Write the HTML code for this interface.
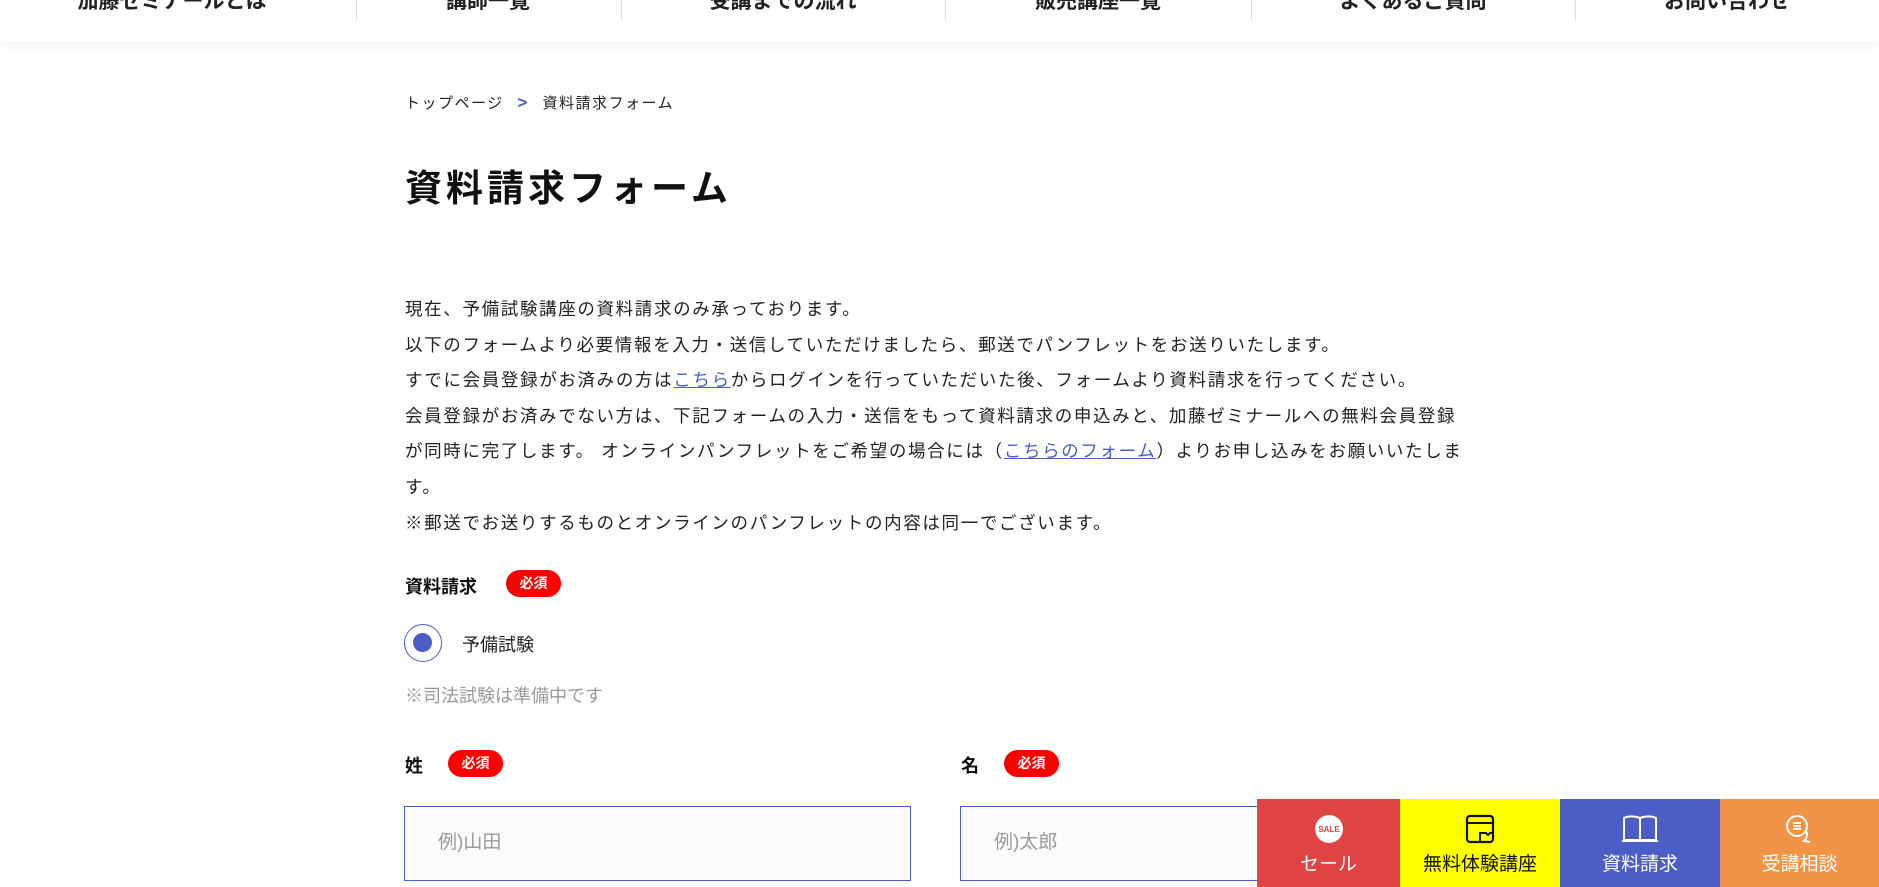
<!DOCTYPE html>
<html><head><meta charset="utf-8"><style>
*{margin:0;padding:0;box-sizing:border-box}
body{width:1879px;height:887px;overflow:hidden;background:#fff;font-family:"Liberation Sans","Noto Sans CJK JP",sans-serif;color:#222;position:relative}
.hdr{position:absolute;left:0;top:0;width:1879px;height:42px;background:#fff;box-shadow:0 3px 10px rgba(0,0,0,.06)}
.nav{position:absolute;top:-15px;font-size:21px;font-weight:bold;color:#222;white-space:nowrap;transform:translateX(-50%)}
.div{position:absolute;top:0;width:1px;height:20px;background:#ddd}
.abs{position:absolute;white-space:nowrap}
.bc{top:92px;left:405px;font-size:15px;letter-spacing:1.5px;color:#222}
h1{position:absolute;left:405px;top:158px;font-size:37px;font-weight:bold;letter-spacing:4px;color:#111}
.p{position:absolute;left:405px;top:292px;width:1072px;font-size:17.5px;line-height:35.6px;letter-spacing:1.65px;color:#222}
.p a{color:#4c5ec6;text-decoration:underline}
.lbl{font-size:18px;font-weight:bold;color:#111}
.badge{position:absolute;height:27px;width:55px;border-radius:14px;background:#f00;color:#fff;font-size:14px;font-weight:bold;text-align:center;line-height:27px}
.radio{position:absolute;left:404px;top:624px;width:38px;height:38px;border:1.5px solid #4c5ec6;border-radius:50%}
.radio::after{content:"";position:absolute;left:8px;top:8px;width:19px;height:19px;border-radius:50%;background:#4c5ec6}
.inp{position:absolute;top:806px;height:75px;border:1.5px solid #4c5ec6;background:#fbfbfb;color:#999;font-size:19px;padding-left:33px;line-height:72px}
.bar{position:absolute;top:799px;height:88px;color:#fff;font-size:19px;text-align:center}
.bar svg{display:block;margin:14px auto 4px;height:32px}
</style></head><body>
<div class="hdr">
<div class="nav" style="left:172px">加藤ゼミナールとは</div>
<div class="div" style="left:356px"></div>
<div class="nav" style="left:488px">講師一覧</div>
<div class="div" style="left:621px"></div>
<div class="nav" style="left:783px">受講までの流れ</div>
<div class="div" style="left:945px"></div>
<div class="nav" style="left:1098px">販売講座一覧</div>
<div class="div" style="left:1251px"></div>
<div class="nav" style="left:1413px">よくあるご質問</div>
<div class="div" style="left:1575px"></div>
<div class="nav" style="left:1727px">お問い合わせ</div>
</div>
<div class="abs bc">トップページ <span style="color:#4c5ec6;font-weight:bold;margin:0 8px;font-size:17px">&gt;</span> 資料請求フォーム</div>
<h1>資料請求フォーム</h1>
<div class="p">現在、予備試験講座の資料請求のみ承っております。<br>以下のフォームより必要情報を入力・送信していただけましたら、郵送でパンフレットをお送りいたします。<br>すでに会員登録がお済みの方は<a>こちら</a>からログインを行っていただいた後、フォームより資料請求を行ってください。<br>会員登録がお済みでない方は、下記フォームの入力・送信をもって資料請求の申込みと、加藤ゼミナールへの無料会員登録<br>が同時に完了します。 オンラインパンフレットをご希望の場合には（<a>こちらのフォーム</a>）よりお申し込みをお願いいたしま<br>す。<br>※郵送でお送りするものとオンラインのパンフレットの内容は同一でございます。</div>
<div class="abs lbl" style="left:405px;top:573px">資料請求</div>
<div class="badge" style="left:506px;top:570px">必須</div>
<div class="radio"></div>
<div class="abs" style="left:462px;top:631px;font-size:18px;color:#222">予備試験</div>
<div class="abs" style="left:405px;top:682px;font-size:18px;color:#999">※司法試験は準備中です</div>
<div class="abs lbl" style="left:405px;top:752px">姓</div>
<div class="badge" style="left:448px;top:750px">必須</div>
<div class="abs lbl" style="left:961px;top:752px">名</div>
<div class="badge" style="left:1004px;top:750px">必須</div>
<div class="inp" style="left:404px;width:507px">例)山田</div>
<div class="inp" style="left:960px;width:400px">例)太郎</div>
<div class="bar" style="left:1257px;width:143px;background:#e04343">
<svg viewBox="0 0 32 32" width="32"><circle cx="16" cy="16" r="14" fill="#fff"/><text x="16" y="19" font-size="8" font-weight="bold" fill="#e04343" text-anchor="middle" font-family="Liberation Sans">SALE</text></svg>セール</div>
<div class="bar" style="left:1400px;width:160px;background:#ff0;color:#111">
<svg viewBox="0 0 32 32" width="32"><rect x="3" y="3" width="26" height="26" rx="3" fill="none" stroke="#111" stroke-width="2.2"/><line x1="3" y1="10" x2="29" y2="10" stroke="#111" stroke-width="2"/><path d="M16 29v-9h6l2 2 2-2h3" fill="none" stroke="#111" stroke-width="2"/></svg>無料体験講座</div>
<div class="bar" style="left:1560px;width:160px;background:#4c5ec6">
<svg viewBox="0 0 40 32" width="40"><path d="M4 5v22h16V5C14 3 8 3 4 5zM36 5v22H20V5c6-2 12-2 16 0z" fill="none" stroke="#fff" stroke-width="2"/><line x1="2" y1="28" x2="38" y2="28" stroke="#fff" stroke-width="2"/></svg>資料請求</div>
<div class="bar" style="left:1720px;width:159px;background:#f29447">
<svg viewBox="0 0 32 32" width="32"><circle cx="13" cy="13" r="10" fill="none" stroke="#fff" stroke-width="2"/><path d="M9 10h8M9 13h8M9 16h8" stroke="#fff" stroke-width="2"/><path d="M22 18a8 8 0 0 1-2 10l6 1" fill="none" stroke="#fff" stroke-width="2"/></svg>受講相談</div>
</body></html>
